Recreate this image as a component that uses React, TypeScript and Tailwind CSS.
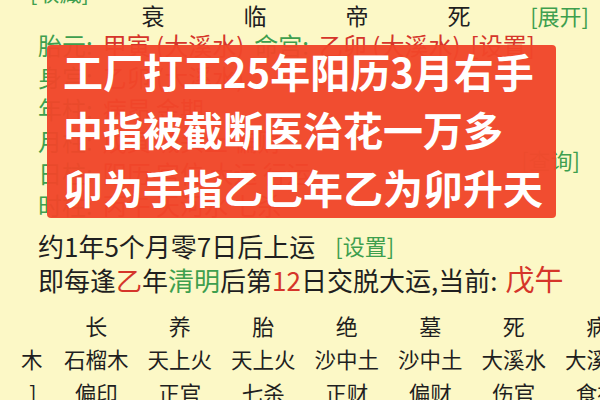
import React from 'react';

const G = 'text-[#3e9f4e]';
const R = 'text-[#d5352a]';

const topCols = ['衰', '临', '帝', '死'];

const hiddenRows: { head: string; rest: string; right?: boolean }[] = [
  { head: '身', rest: '宫: 乙卯 (大溪水)' },
  { head: '年', rest: '柱: 病昂 金期' },
  { head: '月', rest: '柱: 戊寅 城头土 偏财' },
  { head: '日', rest: '柱: 阳历 宫位 大运 行运', right: true },
  { head: '时', rest: '柱: 丙午 天河水 七杀' },
];

const grid = [
  ['', '长', '养', '胎', '绝', '墓', '死', '病'],
  ['木', '石榴木', '天上火', '天上火', '沙中土', '沙中土', '大溪水', '大溪水'],
  [']', '偏印', '正官', '七杀', '正财', '偏财', '伤官', '食神'],
];

const App: React.FC = () => {
  return (
    <div className="relative w-[600px] h-[400px] overflow-hidden bg-[#fcf8c6] font-['Noto_Sans_CJK_SC',sans-serif] text-[#1f1f1f]">
      {/* upper part, mostly covered by the red banner */}
      <div className="-mt-[19px] flex flex-col">
        <div className={`h-[20px] leading-[20px] pl-[30px] text-[22px] ${G}`}>[收藏]</div>
        <div className="mt-[3px] h-[22px] flex items-center text-[23px]">
          <div className="w-[102px]" />
          {topCols.map((c) => (
            <div key={c} className="w-[102px] text-center">
              {c}
            </div>
          ))}
          <span className={`ml-auto mr-[11px] text-[22px] ${G}`}>[展开]</span>
        </div>

        <div className="mt-[3px] flex flex-col pl-[38px] text-[24px] leading-[32px]">
          <div className="flex gap-[10px] whitespace-nowrap">
            <span className={G}>胎元:</span>
            <span className={R}>甲寅 (大溪水)</span>
            <span className={G}>命宫:</span>
            <span className={R}>乙卯 (大溪水)</span>
            <span className={R}>[设置]</span>
          </div>
          {hiddenRows.map((r) => (
            <div key={r.head} className="flex whitespace-nowrap">
              <span className={G}>{r.head}</span>
              <span className={G}>{r.rest.slice(0, 2)}</span>
              <span className={`ml-[10px] ${R}`}>{r.rest.slice(2)}</span>
              {r.right && (
                <span className={`ml-auto mr-[20px] -translate-y-[14px] text-[22px] ${G}`}>
                  <span className="opacity-50">[查</span>询]
                </span>
              )}
            </div>
          ))}
        </div>
      </div>

      {/* red caption banner */}
      <div className="absolute left-[47px] top-[45px] w-[509px] h-[173px] rounded-[4px] bg-[#f0462a]/[0.96] pl-[16px]">
        <div className="-mt-[3px] text-[40px] leading-[58px] font-bold text-white whitespace-nowrap">
          <div>工厂打工25年阳历3月右手</div>
          <div>中指被截断医治花一万多</div>
          <div>卯为手指乙巳年乙为卯升天</div>
        </div>
      </div>

      <div className="mt-[8px] pl-[38px] flex flex-col">
        <div className="flex items-center h-[33px] whitespace-nowrap">
          <span className="text-[26px]">约1年5个月零7日后上运</span>
          <span className={`ml-[20px] text-[22px] ${G}`}>[设置]</span>
        </div>
        <div className="flex items-center h-[34px] text-[26px] whitespace-nowrap">
          <span>即每逢</span>
          <span className={R}>乙</span>
          <span>年</span>
          <span className={G}>清明</span>
          <span>后第</span>
          <span className={R}>12</span>
          <span>日交脱大运,当前:</span>
          <span className={`ml-[8px] text-[29px] ${R}`}>戊午</span>
        </div>
      </div>

      <div className="mt-[12px] -ml-[29px] flex flex-col">
        {grid.map((row, i) => (
          <div key={i} className={`grid grid-cols-[repeat(8,83.5px)] h-[34px] items-center ${i === 0 ? 'text-[22px]' : 'text-[21.5px]'}`}>
            {row.map((cell, j) => (
              <div key={j} className={`whitespace-nowrap ${j === 0 ? (i === 2 ? 'text-right pr-[18px]' : 'text-right pr-[12px]') : 'text-center'}`}>
                {cell}
              </div>
            ))}
          </div>
        ))}
      </div>
    </div>
  );
};

export default App;
